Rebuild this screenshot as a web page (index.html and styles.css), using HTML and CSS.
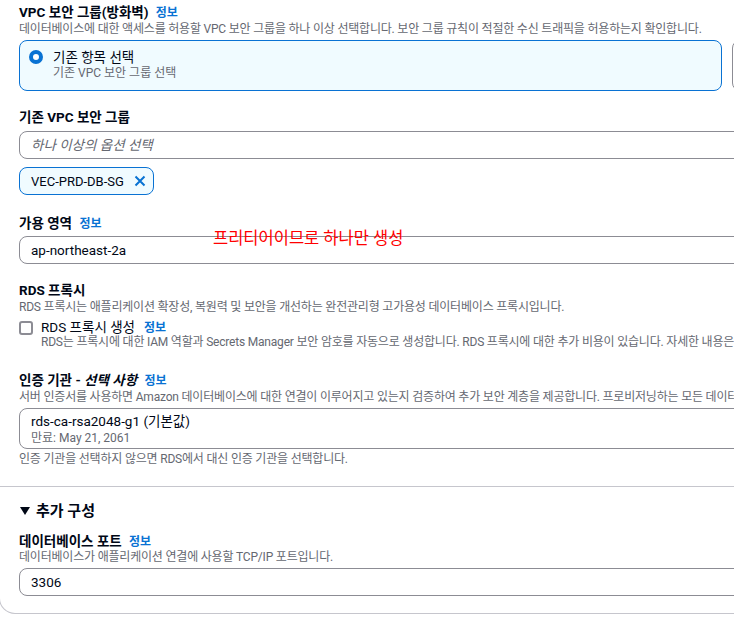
FILE: index.html
```html
<!DOCTYPE html>
<html lang="ko">
<head>
    <meta charset="UTF-8">
    <title>RDS 연결 설정</title>
    <link rel="stylesheet" href="styles.css">
</head>
<body>
    <div class="panel">
        <div class="section">
            <!-- VPC 보안 그룹 -->
            <div class="field">
                <div class="label">VPC 보안 그룹(방화벽) <a class="info">정보</a></div>
                <div class="desc">데이터베이스에 대한 액세스를 허용할 VPC 보안 그룹을 하나 이상 선택합니다. 보안 그룹 규칙이 적절한 수신 트래픽을 허용하는지 확인합니다.</div>
                <div class="tiles">
                    <div class="tile selected">
                        <span class="radio"></span>
                        <div>
                            <div class="tile-title">기존 항목 선택</div>
                            <div class="tile-sub">기존 VPC 보안 그룹 선택</div>
                        </div>
                    </div>
                    <div class="tile">
                        <span class="radio off"></span>
                        <div>
                            <div class="tile-title">새로 생성</div>
                            <div class="tile-sub">새 VPC 보안 그룹 생성</div>
                        </div>
                    </div>
                </div>
            </div>

            <div class="field sg">
                <div class="label">기존 VPC 보안 그룹</div>
                <div class="input placeholder">하나 이상의 옵션 선택</div>
                <div class="token">
                    VEC-PRD-DB-SG
                    <svg width="12" height="12" viewBox="0 0 12 12"><path d="M1.5 1.5l9 9M10.5 1.5l-9 9" stroke="#0972d3" stroke-width="2" fill="none"/></svg>
                </div>
            </div>

            <div class="field">
                <div class="label">가용 영역 <a class="info">정보</a></div>
                <div class="input-wrap">
                    <div class="input">ap-northeast-2a</div>
                    <span class="note">프리티어이므로 하나만 생성</span>
                </div>
            </div>

            <div class="field">
                <div class="label">RDS 프록시</div>
                <div class="desc">RDS 프록시는 애플리케이션 확장성, 복원력 및 보안을 개선하는 완전관리형 고가용성 데이터베이스 프록시입니다.</div>
                <div class="check-row">
                    <span class="checkbox"></span>
                    <div>
                        <div class="check-label">RDS 프록시 생성 <a class="info">정보</a></div>
                        <div class="desc">RDS는 프록시에 대한 IAM 역할과 Secrets Manager 보안 암호를 자동으로 생성합니다. RDS 프록시에 대한 추가 비용이 있습니다. 자세한 내용은 다음 요금 페이지를 참조하세요.</div>
                    </div>
                </div>
            </div>

            <div class="field ca">
                <div class="label">인증 기관 - <i>선택 사항</i> <a class="info">정보</a></div>
                <div class="desc">서버 인증서를 사용하면 Amazon 데이터베이스에 대한 연결이 이루어지고 있는지 검증하여 추가 보안 계층을 제공합니다. 프로비저닝하는 모든 데이터베이스에 대해 인증 기관을 선택할 수 있습니다.</div>
                <div class="select">
                    <div class="select-main">rds-ca-rsa2048-g1 (기본값)</div>
                    <div class="select-sub">만료: May 21, 2061</div>
                </div>
                <div class="desc">인증 기관을 선택하지 않으면 RDS에서 대신 인증 기관을 선택합니다.</div>
            </div>
        </div>

        <div class="section extra">
            <div class="expander">
                <svg width="10" height="8" viewBox="0 0 10 8"><path d="M0 0h10L5 8z" fill="#000716"/></svg>
                추가 구성
            </div>
            <div class="field">
                <div class="label">데이터베이스 포트 <a class="info">정보</a></div>
                <div class="desc">데이터베이스가 애플리케이션 연결에 사용할 TCP/IP 포트입니다.</div>
                <div class="input">3306</div>
            </div>
        </div>
    </div>
</body>
</html>
```

FILE: styles.css
```css
body {
    margin: 0;
    font-family: Roboto, "Noto Sans CJK KR", sans-serif;
    color: #000716;
    background: #fff;
    overflow: hidden;
    width: 734px;
    height: 617px;
}
.panel {
    width: 1460px;
    margin-left: -1px;
    border: 1px solid #c6c6cd;
    border-top: none;
    border-radius: 0 0 16px 16px;
}
.section {
    padding: 3px 20px 19px 19px;
}
.field {
    margin-bottom: 17px;
}
.field.sg {
    margin-bottom: 19px;
}
.label {
    font-size: 13.5px;
    font-weight: 700;
    line-height: 18px;
}
.label i {
    font-style: italic;
}
.info {
    color: #0972d3;
    font-size: 12px;
    font-weight: 700;
    line-height: 16px;
    margin-left: 4px;
}
.desc {
    font-size: 12px;
    line-height: 16px;
    color: #656871;
    letter-spacing: -0.2px;
    white-space: nowrap;
}
.tiles {
    display: flex;
    gap: 10px;
    margin-top: 3px;
}
.tile {
    width: 703px;
    box-sizing: border-box;
    border: 1px solid #8c8c94;
    border-radius: 8px;
    padding: 8px 12px 9px 9px;
    display: flex;
    gap: 10px;
}
.tile.selected {
    border-color: #0972d3;
    background: #f0fbff;
}
.radio {
    width: 14px;
    height: 14px;
    box-sizing: border-box;
    border: 4px solid #0972d3;
    border-radius: 50%;
    background: #fff;
    margin-top: 1px;
}
.radio.off {
    border: 2px solid #8c8c94;
}
.tile-title {
    font-size: 13.5px;
    line-height: 16px;
}
.tile-sub {
    font-size: 12px;
    line-height: 16px;
    color: #656871;
}
.input {
    margin-top: 5px;
    height: 28px;
    box-sizing: border-box;
    border: 1px solid #8c8c94;
    border-radius: 8px;
    padding: 0 12px 0 11px;
    font-size: 13.5px;
    line-height: 26px;
}
.input.placeholder {
    color: #656871;
    font-style: italic;
}
.token {
    display: flex;
    width: fit-content;
    align-items: center;
    gap: 10px;
    margin-top: 8px;
    height: 28px;
    box-sizing: border-box;
    padding: 0 7px 0 11px;
    border: 1px solid #0972d3;
    border-radius: 8px;
    background: #f0fbff;
    font-size: 13px;
}
.input-wrap {
    position: relative;
}
.input-wrap .input {
    margin-top: 4px;
}
.note {
    position: absolute;
    left: 194px;
    top: -7px;
    color: #ff0000;
    font-size: 16.5px;
    line-height: 20px;
}
.check-row {
    display: flex;
    gap: 8px;
    margin-top: 6px;
}
.checkbox {
    width: 14px;
    height: 14px;
    box-sizing: border-box;
    border: 2px solid #8c8c94;
    border-radius: 3px;
}
.check-label {
    display: flex;
    align-items: center;
    height: 13px;
    font-size: 13.5px;
    line-height: 13px;
}
.check-label .info {
    margin-left: 9px;
}
.ca {
    margin-top: 21px;
    margin-bottom: 0;
}
.select {
    margin-top: 3px;
    border: 1px solid #8c8c94;
    border-radius: 8px;
    padding: 3px 12px 2px 11px;
}
.select-main {
    font-size: 13.5px;
    line-height: 18px;
}
.select-sub {
    font-size: 12px;
    line-height: 16px;
    color: #656871;
}
.ca .select + .desc {
    margin-top: 2px;
}
.extra {
    border-top: 1px solid #c6c6cd;
    padding-top: 14px;
    padding-bottom: 17px;
}
.expander {
    display: flex;
    align-items: center;
    gap: 6px;
    font-size: 15px;
    font-weight: 700;
    line-height: 20px;
    padding-left: 1px;
    margin-bottom: 12px;
}
.extra .label {
    line-height: 16px;
}
.extra .desc {
    margin-top: -1px;
}
.extra .input {
    margin-top: 3px;
}
.extra .field {
    margin-bottom: 0;
}
```
